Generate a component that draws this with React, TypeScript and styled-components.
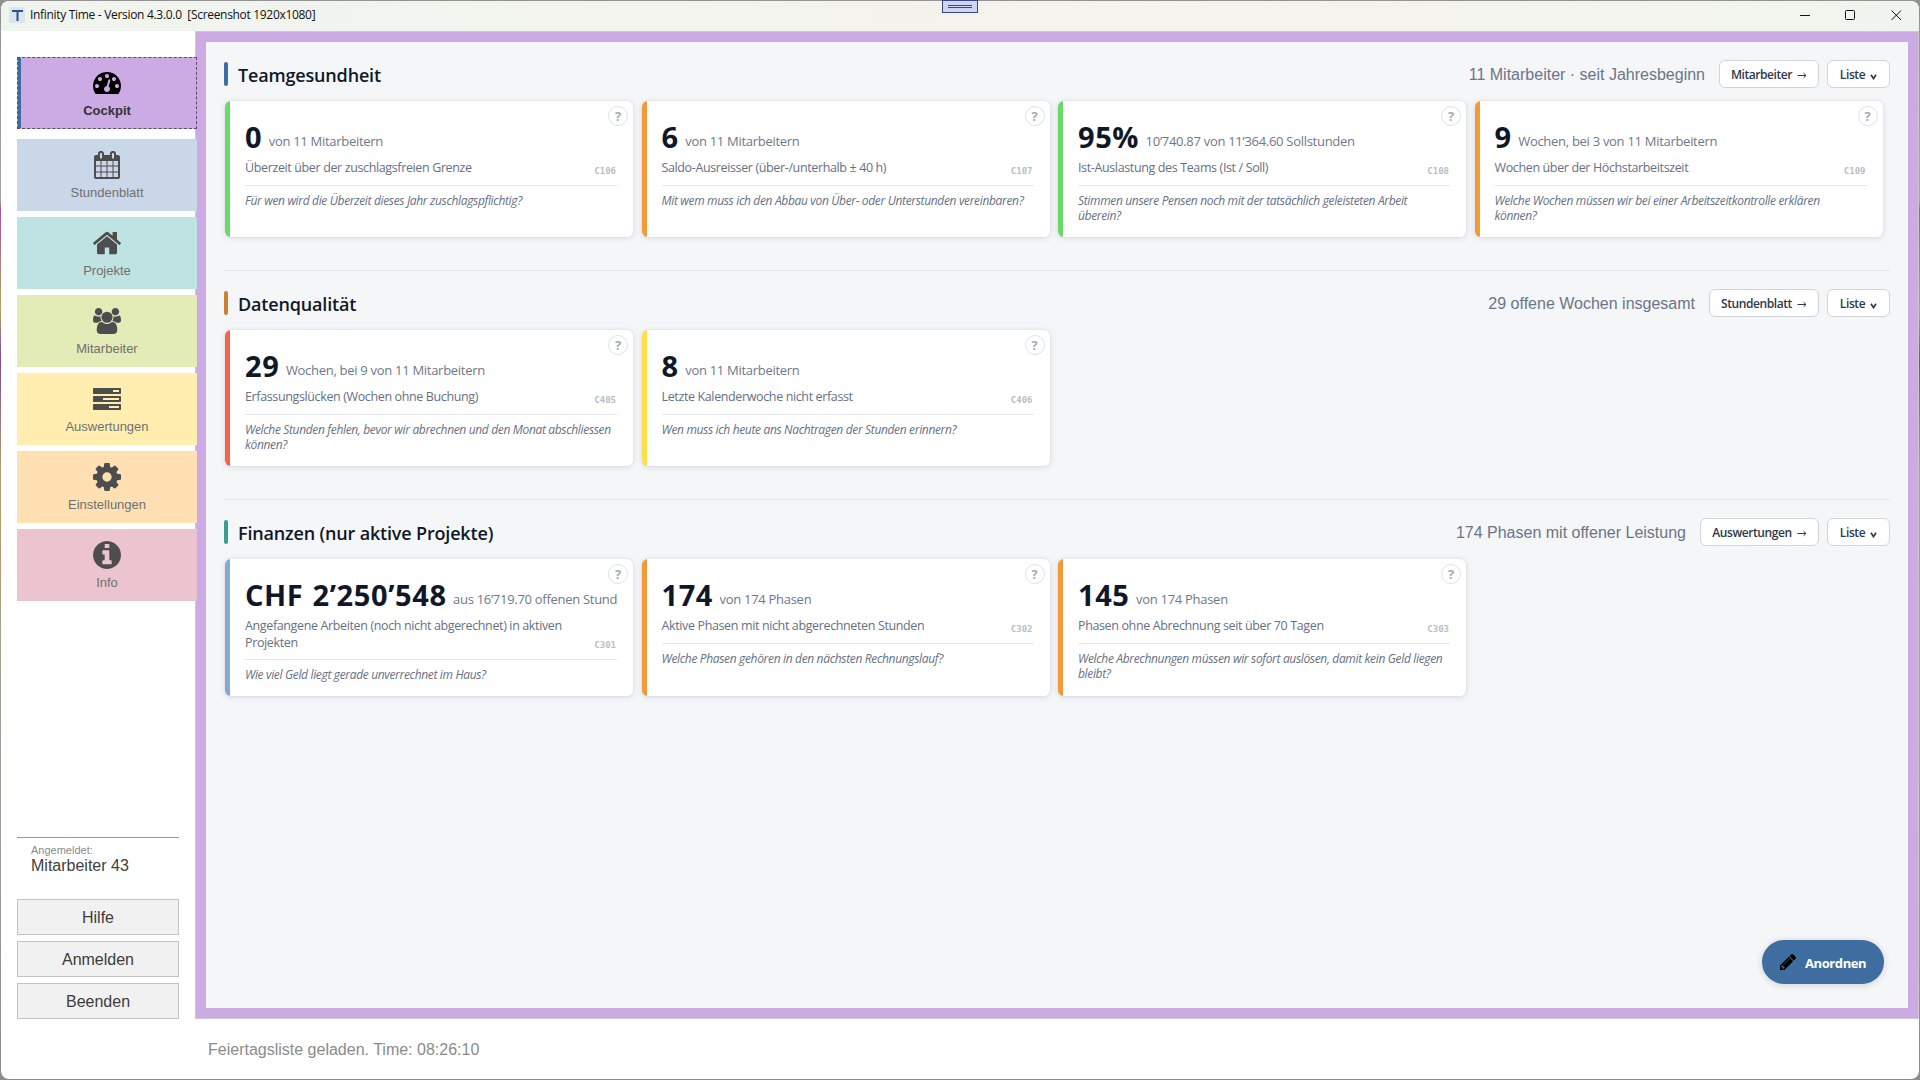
import React from "react";
import styled, { createGlobalStyle } from "styled-components";

const UI = `"Open Sans", "Noto Sans", sans-serif`;
const ARIAL = `"Liberation Sans", Arial, sans-serif`;

const Global = createGlobalStyle`
  *, *::before, *::after { box-sizing: border-box; }
  html, body { margin: 0; padding: 0; }
  body { width: 1920px; height: 1080px; overflow: hidden; font-family: ${ARIAL}; }
  button { font: inherit; padding: 0; margin: 0; cursor: pointer; }
`;

const Desktop = styled.div`
  width: 1920px;
  height: 1080px;
  padding: 1px;
  background: linear-gradient(180deg, #929292 0, #a5a5a5 200px, #a9549f 210px, #b8a35c 310px, #7c4a9b 360px, #b2a06a 470px, #b79a70 560px, #a8a294 640px, #9c9c9c 860px, #8c8c8c 1080px);
`;

const Window = styled.div`
  display: grid;
  grid-template-rows: 30px 988px 1fr;
  width: 1918px;
  height: 1078px;
  background: #fff;
  border-radius: 8px;
  overflow: hidden;
`;

const TitleBar = styled.header`
  display: flex;
  align-items: center;
  padding: 0 17px 2px 8px;
  background: linear-gradient(90deg, #f0f4ef 0, #f4f3ec 60%, #f1f4ee 100%);
`;

const AppBadge = styled.svg`
  width: 16px;
  height: 16px;
  margin-right: 5px;
`;

const WindowTitle = styled.span`
  flex: 1;
  font: 400 12px/20px ${UI};
  letter-spacing: -0.31px;
  white-space: pre;
  color: #111;
`;

const Controls = styled.div`
  display: flex;
  gap: 35px;
`;

const ControlGlyph = styled.svg`
  width: 11px;
  height: 11px;
  fill: none;
  stroke: #111;
`;

const DockHandle = styled.div`
  position: absolute;
  left: 942px;
  top: 0;
  width: 36px;
  height: 13px;
  display: flex;
  flex-direction: column;
  align-items: center;
  justify-content: center;
  gap: 1px;
  border: 1px solid #3d4780;
  background: #ccd6f3;
`;

const HandleLine = styled.i`
  width: 24px;
  height: 1px;
  background: #3d4780;
`;

const Body = styled.div`
  display: grid;
  grid-template-columns: 194px 1fr;
`;

const Sidebar = styled.aside`
  position: relative;
  z-index: 1;
  display: flex;
  flex-direction: column;
  padding: 26px 0 0 16px;
`;

const Nav = styled.nav`
  display: flex;
  flex-direction: column;
  gap: 6px;
  width: 180px;
`;

const NavButton = styled.button<{ $bg: string; $active?: boolean }>`
  display: flex;
  flex-direction: column;
  align-items: center;
  height: 72px;
  padding-top: ${(p) => (p.$active ? 11 : 12)}px;
  margin-bottom: ${(p) => (p.$active ? 4 : 0)}px;
  border: ${(p) => (p.$active ? "1px dashed #5b4a72" : "0")};
  background: ${(p) => p.$bg};
  box-shadow: ${(p) => (p.$active ? "inset 3px 0 0 #3d6d9e" : "none")};
  color: ${(p) => (p.$active ? "#000" : "#4d4d4d")};
`;

const NavIcon = styled.svg`
  width: 28px;
  height: 28px;
  fill: currentColor;
`;

const NavLabel = styled.span<{ $active?: boolean }>`
  margin-top: 6px;
  font: ${(p) => (p.$active ? 700 : 400)} 13px/16px ${ARIAL};
  color: ${(p) => (p.$active ? "#333" : "#707070")};
`;

const Account = styled.div`
  width: 162px;
  margin-top: auto;
  padding: 6px 14px 0;
  height: 62px;
  border-top: 1px solid #999;
`;

const AccountCaption = styled.div`
  font: 400 11px/13px ${ARIAL};
  color: #8a8a8a;
`;

const AccountName = styled.div`
  font: 400 16px/18px ${ARIAL};
  color: #404040;
`;

const SideActions = styled.div`
  display: flex;
  flex-direction: column;
  gap: 6px;
  width: 162px;
`;

const SideButton = styled.button`
  height: 36px;
  padding-top: 1px;
  border: 1px solid #c3c3c3;
  background: #f1f1f1;
  font: 400 16px/33px ${ARIAL};
  color: #3c3c3c;
`;

const Frame = styled.main`
  position: relative;
  border: 1px solid #ccc9cf;
  padding: 10px;
  background: #ccaae3;
`;

const Board = styled.div`
  height: 966px;
  padding: 18px 18px 0;
  background: #f4f6f8;
`;

const Section = styled.section`
  padding-bottom: 33px;
  & + & {
    border-top: 1px solid #e4e7ec;
    padding-top: 18px;
  }
`;

const SectionHead = styled.div`
  display: flex;
  align-items: center;
  height: 28px;
  margin-bottom: 13px;
`;

const Accent = styled.i<{ $color: string }>`
  width: 4px;
  height: 24px;
  border-radius: 2px;
  margin-right: 10px;
  background: ${(p) => p.$color};
`;

const SectionTitle = styled.h2`
  flex: 1;
  margin: 0;
  padding-top: 2px;
  font: 600 18px/26px ${UI};
  letter-spacing: -0.17px;
  color: #101828;
`;

const SectionNote = styled.span`
  margin-right: 14px;
  padding-top: 1px;
  font: 400 16px/27px ${ARIAL};
  color: #6b7588;
`;

const PillButton = styled.button<{ $width: number }>`
  display: flex;
  align-items: center;
  justify-content: center;
  gap: 5px;
  width: ${(p) => p.$width}px;
  height: 28px;
  padding-top: 1px;
  border: 1px solid #d0d4dd;
  border-radius: 6px;
  background: #fff;
  font: 600 12px/25px ${UI};
  letter-spacing: -0.42px;
  color: #2f384b;
  & + & { margin-left: 8px; }
`;

const ArrowGlyph = styled.svg`
  width: 10px;
  height: 7px;
  margin-top: 1px;
  fill: none;
  stroke: #2f384b;
`;

const ChevronGlyph = styled.svg`
  width: 7px;
  height: 6px;
  margin-top: 5px;
  fill: none;
  stroke: #2f384b;
  stroke-width: 1.7;
`;

const CardGrid = styled.div`
  display: grid;
  grid-template-columns: repeat(4, 416.5px);
  grid-auto-rows: minmax(136px, auto);
`;

const CardBox = styled.article<{ $color: string }>`
  position: relative;
  margin: 0 7.5px 0 1px;
  padding: 19px 16px 13.6px 20px;
  border-radius: 6px;
  background: linear-gradient(90deg, ${(p) => p.$color} 5px, #fff 5px);
  box-shadow: 0 0 1px rgba(30, 40, 60, 0.2), 0 1px 6px rgba(30, 40, 60, 0.13);
`;

const Help = styled.span`
  position: absolute;
  top: 5px;
  right: 5px;
  width: 20px;
  height: 20px;
  border: 1px solid #dde2ea;
  border-radius: 50%;
  background: #fff;
  text-align: center;
  font: 700 13px/18px ${UI};
  color: #a3abba;
`;

const ValueRow = styled.div`
  display: flex;
  align-items: flex-end;
  gap: 6.5px;
  height: 32px;
  white-space: nowrap;
`;

const Value = styled.strong`
  font: 700 29px/31px ${UI};
  letter-spacing: 0.6px;
  word-spacing: 1px;
  color: #101828;
`;

const Detail = styled.span`
  min-width: 0;
  overflow: hidden;
  font: 400 13px/22px ${UI};
  letter-spacing: -0.29px;
  color: #6f788b;
`;

const LabelRow = styled.div`
  display: flex;
  align-items: flex-end;
  justify-content: space-between;
  margin-top: 8px;
  padding: 0 1px 8.4px 0;
  border-bottom: 1px solid #e4e7ec;
`;

const Label = styled.span`
  max-width: 335px;
  font: 400 12.5px/16.5px ${UI};
  letter-spacing: -0.37px;
  color: #667085;
`;

const Code = styled.span`
  font: 700 9px/12px "DejaVu Sans Mono", monospace;
  color: #b7bdc8;
`;

const Question = styled.p`
  max-width: 368px;
  margin: 7px 0 0;
  font: italic 400 12px/15px ${UI};
  letter-spacing: -0.34px;
  color: #667085;
`;

const ArrangeButton = styled.button`
  position: absolute;
  right: 34px;
  bottom: 34px;
  display: flex;
  align-items: center;
  gap: 9px;
  width: 122px;
  height: 44px;
  padding: 2px 0 0 18px;
  border: 0;
  border-radius: 22px;
  background: #3f6d9f;
  box-shadow: 0 1px 6px rgba(30, 40, 60, 0.18);
  font: 700 13px/42px ${UI};
  letter-spacing: -0.4px;
  color: #fff;
`;

const PencilIcon = styled.svg`
  width: 16px;
  height: 16px;
  margin-top: -2px;
  fill: #000;
`;

const StatusBar = styled.footer`
  padding: 21px 0 0 207px;
  font: 400 16px/20px ${ARIAL};
  color: #8b8b8b;
`;

interface NavItem {
  label: string;
  bg: string;
  viewBox: string;
  path: string;
  active?: boolean;
}

const NAV: NavItem[] = [
  {
    label: "Cockpit",
    bg: "#ccaae3",
    active: true,
    viewBox: "0 256 1792 1408",
    path: "M384 1152q0-53-37.500-90.500t-90.500-37.500-90.500 37.500-37.500 90.500 37.500 90.500 90.500 37.500 90.500-37.500 37.500-90.500zm192-448q0-53-37.500-90.500t-90.500-37.500-90.500 37.500-37.500 90.500 37.500 90.500 90.500 37.500 90.500-37.500 37.500-90.500zm428 481l101-382q6-26-7.500-48.500t-38.500-29.500-48 6.500-30 39.500l-101 382q-60 5-107 43.500t-63 98.500q-20 77 20 146t117 89 146-20 89-117q16-60-6-117t-72-91zm660-33q0-53-37.500-90.500t-90.500-37.500-90.500 37.500-37.500 90.500 37.500 90.500 90.500 37.500 90.500-37.500 37.500-90.500zm-640-640q0-53-37.500-90.500t-90.500-37.500-90.500 37.500-37.500 90.500 37.500 90.500 90.500 37.500 90.500-37.500 37.500-90.500zm448 192q0-53-37.500-90.500t-90.500-37.500-90.500 37.500-37.500 90.500 37.500 90.500 90.500 37.500 90.500-37.500 37.500-90.500zm320 448q0 261-141 483-19 29-54 29h-1402q-35 0-54-29-141-221-141-483 0-182 71-348t191-286 286-191 348-71 348 71 286 191 191 286 71 348z",
  },
  {
    label: "Stundenblatt",
    bg: "#cad7e8",
    viewBox: "64 0 1664 1792",
    path: "M192 1664h288v-288h-288v288zm352 0h320v-288h-320v288zm-352-352h288v-320h-288v320zm352 0h320v-320h-320v320zm-352-384h288v-288h-288v288zm736 736h320v-288h-320v288zm-384-736h320v-288h-320v288zm768 736h288v-288h-288v288zm-384-352h320v-320h-320v320zm-352-864v-288q0-13-9.500-22.500t-22.500-9.500h-64q-13 0-22.500 9.500t-9.500 22.500v288q0 13 9.500 22.500t22.500 9.500h64q13 0 22.500-9.500t9.500-22.500zm736 864h288v-320h-288v320zm-384-384h320v-288h-320v288zm384 0h288v-288h-288v288zm32-480v-288q0-13-9.500-22.500t-22.500-9.500h-64q-13 0-22.500 9.500t-9.500 22.500v288q0 13 9.500 22.500t22.500 9.500h64q13 0 22.500-9.500t9.500-22.500zm384-64v1280q0 52-38 90t-90 38h-1408q-52 0-90-38t-38-90v-1280q0-52 38-90t90-38h128v-96q0-66 47-113t113-47h64q66 0 113 47t47 113v96h384v-96q0-66 47-113t113-47h64q66 0 113 47t47 113v96h128q52 0 90 38t38 90z",
  },
  {
    label: "Projekte",
    bg: "#bfe2e2",
    viewBox: "89 253 1614 1283",
    path: "M1472 992v480q0 26-19 45t-45 19h-384v-384h-256v384h-384q-26 0-45-19t-19-45v-480q0-1 .5-3t.5-3l575-474 575 474q1 2 1 6zm223-69l-62 74q-8 9-21 11h-3q-13 0-21-7l-692-577-692 577q-12 8-24 7-13-2-21-11l-62-74q-8-10-7-23.500t11-21.500l719-599q32-26 76-26t76 26l244 204v-195q0-14 9-23t23-9h192q14 0 23 9t9 23v408l219 182q10 8 11 21.500t-7 23.500z",
  },
  {
    label: "Mitarbeiter",
    bg: "#e3ebb7",
    viewBox: "-64 0 1920 1792",
    path: "M529 896q-162 5-265 128h-134q-82 0-138-40.500t-56-118.500q0-353 124-353 6 0 43.500 21t97.500 42.500 119 21.500q67 0 133-23-5 37-5 66 0 139 81 256zm1071 637q0 120-73 189.500t-194 69.500h-874q-121 0-194-69.500t-73-189.500q0-53 3.500-103.500t14-109 26.500-108.500 43-97.500 62-81 85.500-53.500 111.500-20q10 0 43 21.500t73 48 107 48 135 21.500 135-21.500 107-48 73-48 43-21.500q61 0 111.500 20t85.500 53.500 62 81 43 97.500 26.500 108.500 14 109 3.500 103.500zm-1024-1277q0 106-75 181t-181 75-181-75-75-181 75-181 181-75 181 75 75 181zm704 384q0 159-112.500 271.500t-271.500 112.500-271.500-112.500-112.500-271.500 112.500-271.500 271.500-112.500 271.500 112.500 112.500 271.500zm576 225q0 78-56 118.500t-138 40.500h-134q-103-123-265-128 81-117 81-256 0-29-5-66 66 23 133 23 59 0 119-21.500t97.500-42.500 43.500-21q124 0 124 353zm-128-609q0 106-75 181t-181 75-181-75-75-181 75-181 181-75 181 75 75 181z",
  },
  {
    label: "Auswertungen",
    bg: "#ffeeb0",
    viewBox: "0 128 1792 1408",
    path: "M1024 1408h640v-128h-640v128zm-384-512h1024v-128h-1024v128zm640-512h384v-128h-384v128zm512 832v256q0 26-19 45t-45 19h-1664q-26 0-45-19t-19-45v-256q0-26 19-45t45-19h1664q26 0 45 19t19 45zm0-512v256q0 26-19 45t-45 19h-1664q-26 0-45-19t-19-45v-256q0-26 19-45t45-19h1664q26 0 45 19t19 45zm0-512v256q0 26-19 45t-45 19h-1664q-26 0-45-19t-19-45v-256q0-26 19-45t45-19h1664q26 0 45 19t19 45z",
  },
  {
    label: "Einstellungen",
    bg: "#ffe0b2",
    viewBox: "128 128 1536 1536",
    path: "M1152 896q0-106-75-181t-181-75-181 75-75 181 75 181 181 75 181-75 75-181zm512-109v222q0 12-8 23t-20 13l-185 28q-19 54-39 91 35 50 107 138 10 12 10 25t-9 23q-27 37-99 108t-94 71q-12 0-26-9l-138-108q-44 23-91 38-16 136-29 186-7 28-36 28h-222q-14 0-24.500-8.500t-11.500-21.500l-28-184q-49-16-90-37l-141 107q-10 9-25 9-14 0-25-11-126-114-165-168-7-10-7-23 0-12 8-23 15-21 51-66.500t54-70.500q-27-50-41-99l-183-27q-13-2-21-12.500t-8-23.500v-222q0-12 8-23t19-13l186-28q14-46 39-92-40-57-107-138-10-12-10-24 0-10 9-23 26-36 98.500-107.500t94.500-71.500q13 0 26 10l138 107q44-23 91-38 16-136 29-186 7-28 36-28h222q14 0 24.500 8.500t11.500 21.500l28 184q49 16 90 37l142-107q9-9 24-9 13 0 25 10 129 119 165 170 7 8 7 22 0 12-8 23-15 21-51 66.500t-54 70.500q26 50 41 98l183 28q13 2 21 12.500t8 23.500z",
  },
  {
    label: "Info",
    bg: "#ebc4cf",
    viewBox: "128 128 1536 1536",
    path: "M1152 1376v-160q0-14-9-23t-23-9h-96v-512q0-14-9-23t-23-9h-320q-14 0-23 9t-9 23v160q0 14 9 23t23 9h96v320h-96q-14 0-23 9t-9 23v160q0 14 9 23t23 9h448q14 0 23-9t9-23zm-128-896v-160q0-14-9-23t-23-9h-192q-14 0-23 9t-9 23v160q0 14 9 23t23 9h192q14 0 23-9t9-23zm640 416q0 209-103 385.500t-279.500 279.500-385.500 103-385.500-103-279.500-279.500-103-385.500 103-385.500 279.500-279.500 385.500-103 385.500 103 279.500 279.500 103 385.500z",
  },
];

const GREEN = "#66dc66";
const ORANGE = "#f29a38";
const RED = "#f8614c";
const YELLOW = "#ffe04a";
const BLUE = "#84a9d3";

interface Kpi {
  code: string;
  color: string;
  value: string;
  detail: string;
  label: string;
  question: string;
}

interface Group {
  title: string;
  accent: string;
  note: string;
  link: string;
  linkWidth: number;
  cards: Kpi[];
}

const GROUPS: Group[] = [
  {
    title: "Teamgesundheit",
    accent: "#3d6fa3",
    note: "11 Mitarbeiter · seit Jahresbeginn",
    link: "Mitarbeiter",
    linkWidth: 100,
    cards: [
      { code: "C106", color: GREEN, value: "0", detail: "von 11 Mitarbeitern", label: "Überzeit über der zuschlagsfreien Grenze", question: "Für wen wird die Überzeit dieses Jahr zuschlagspflichtig?" },
      { code: "C107", color: ORANGE, value: "6", detail: "von 11 Mitarbeitern", label: "Saldo-Ausreisser (über-/unterhalb ± 40 h)", question: "Mit wem muss ich den Abbau von Über- oder Unterstunden vereinbaren?" },
      { code: "C108", color: GREEN, value: "95%", detail: "10’740.87 von 11’364.60 Sollstunden", label: "Ist-Auslastung des Teams (Ist / Soll)", question: "Stimmen unsere Pensen noch mit der tatsächlich geleisteten Arbeit überein?" },
      { code: "C109", color: ORANGE, value: "9", detail: "Wochen, bei 3 von 11 Mitarbeitern", label: "Wochen über der Höchstarbeitszeit", question: "Welche Wochen müssen wir bei einer Arbeitszeitkontrolle erklären können?" },
    ],
  },
  {
    title: "Datenqualität",
    accent: "#cc7f2d",
    note: "29 offene Wochen insgesamt",
    link: "Stundenblatt",
    linkWidth: 110,
    cards: [
      { code: "C405", color: RED, value: "29", detail: "Wochen, bei 9 von 11 Mitarbeitern", label: "Erfassungslücken (Wochen ohne Buchung)", question: "Welche Stunden fehlen, bevor wir abrechnen und den Monat abschliessen können?" },
      { code: "C406", color: YELLOW, value: "8", detail: "von 11 Mitarbeitern", label: "Letzte Kalenderwoche nicht erfasst", question: "Wen muss ich heute ans Nachtragen der Stunden erinnern?" },
    ],
  },
  {
    title: "Finanzen (nur aktive Projekte)",
    accent: "#3a9e8c",
    note: "174 Phasen mit offener Leistung",
    link: "Auswertungen",
    linkWidth: 119,
    cards: [
      { code: "C301", color: BLUE, value: "CHF 2’250’548", detail: "aus 16’719.70 offenen Stunden", label: "Angefangene Arbeiten (noch nicht abgerechnet) in aktiven Projekten", question: "Wie viel Geld liegt gerade unverrechnet im Haus?" },
      { code: "C302", color: ORANGE, value: "174", detail: "von 174 Phasen", label: "Aktive Phasen mit nicht abgerechneten Stunden", question: "Welche Phasen gehören in den nächsten Rechnungslauf?" },
      { code: "C303", color: ORANGE, value: "145", detail: "von 174 Phasen", label: "Phasen ohne Abrechnung seit über 70 Tagen", question: "Welche Abrechnungen müssen wir sofort auslösen, damit kein Geld liegen bleibt?" },
    ],
  },
];

function KpiCard({ kpi }: { kpi: Kpi }) {
  return (
    <CardBox $color={kpi.color}>
      <Help>?</Help>
      <ValueRow>
        <Value>{kpi.value}</Value>
        <Detail>{kpi.detail}</Detail>
      </ValueRow>
      <LabelRow>
        <Label>{kpi.label}</Label>
        <Code>{kpi.code}</Code>
      </LabelRow>
      <Question>{kpi.question}</Question>
    </CardBox>
  );
}

function KpiGroup({ group }: { group: Group }) {
  return (
    <Section>
      <SectionHead>
        <Accent $color={group.accent} />
        <SectionTitle>{group.title}</SectionTitle>
        <SectionNote>{group.note}</SectionNote>
        <PillButton $width={group.linkWidth}>
          {group.link}
          <ArrowGlyph viewBox="0 0 10 7">
            <path d="M0.500 3.500H9M6.500 1.200L9 3.500L6.500 5.800" />
          </ArrowGlyph>
        </PillButton>
        <PillButton $width={63}>
          Liste
          <ChevronGlyph viewBox="0 0 7 6">
            <path d="M1 0.800L3.500 4.600L6 0.800" />
          </ChevronGlyph>
        </PillButton>
      </SectionHead>
      <CardGrid>
        {group.cards.map((kpi) => (
          <KpiCard key={kpi.code} kpi={kpi} />
        ))}
      </CardGrid>
    </Section>
  );
}

export default function App() {
  return (
    <Desktop>
      <Global />
      <Window>
        <TitleBar>
          <AppBadge viewBox="0 0 16 16">
            <rect width="16" height="16" rx="1.500" fill="#dbe4f2" />
            <path d="M3 3H14V5H9.500V14H7.500V5H3Z" fill="#2c5480" />
          </AppBadge>
          <WindowTitle>{"Infinity Time - Version 4.3.0.0  [Screenshot 1920x1080]"}</WindowTitle>
          <Controls>
            <ControlGlyph viewBox="0 0 11 11">
              <path d="M1 5.500H11" />
            </ControlGlyph>
            <ControlGlyph viewBox="0 0 11 11">
              <rect x="0.500" y="0.500" width="9" height="9" rx="1" />
            </ControlGlyph>
            <ControlGlyph viewBox="0 0 11 11">
              <path d="M0.500 0.500L10 10M10 0.500L0.500 10" />
            </ControlGlyph>
          </Controls>
        </TitleBar>
        <Body>
          <Sidebar>
            <Nav>
              {NAV.map((item) => (
                <NavButton key={item.label} $bg={item.bg} $active={item.active}>
                  <NavIcon viewBox={item.viewBox}>
                    <path d={item.path} />
                  </NavIcon>
                  <NavLabel $active={item.active}>{item.label}</NavLabel>
                </NavButton>
              ))}
            </Nav>
            <Account>
              <AccountCaption>Angemeldet:</AccountCaption>
              <AccountName>Mitarbeiter 43</AccountName>
            </Account>
            <SideActions>
              <SideButton>Hilfe</SideButton>
              <SideButton>Anmelden</SideButton>
              <SideButton>Beenden</SideButton>
            </SideActions>
          </Sidebar>
          <Frame>
            <Board>
              {GROUPS.map((group) => (
                <KpiGroup key={group.title} group={group} />
              ))}
            </Board>
            <ArrangeButton>
              <PencilIcon viewBox="128 149 1515 1515">
                <path d="M491 1536l91-91-235-235-91 91v107h128v128h107zm523-928q0-22-22-22-10 0-17 7l-542 542q-7 7-7 17 0 22 22 22 10 0 17-7l542-542q7-7 7-17zm-54-192l416 416-832 832h-416v-416zm683 96q0 53-37 90l-166 166-416-416 166-165q36-38 90-38 53 0 91 38l235 234q37 39 37 91z" />
              </PencilIcon>
              Anordnen
            </ArrangeButton>
          </Frame>
        </Body>
        <StatusBar>Feiertagsliste geladen. Time: 08:26:10</StatusBar>
      </Window>
      <DockHandle>
        <HandleLine />
        <HandleLine />
      </DockHandle>
    </Desktop>
  );
}
